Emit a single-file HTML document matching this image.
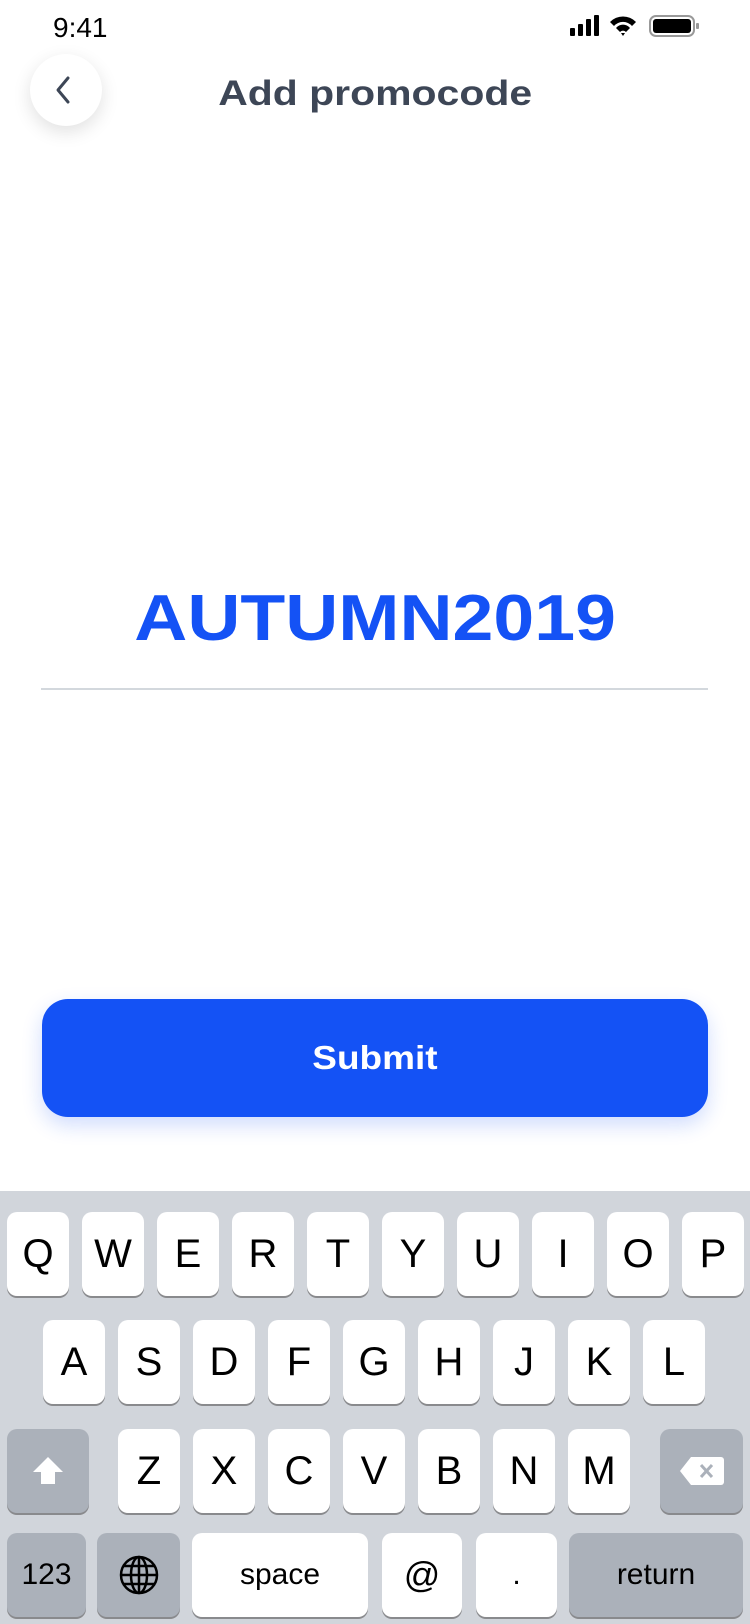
<!DOCTYPE html>
<html><head><meta charset="utf-8"><style>
*{margin:0;padding:0;box-sizing:border-box}
body{width:750px;height:1624px;background:#fff;position:relative;overflow:hidden;font-family:"Liberation Sans",sans-serif}
.abs{position:absolute}
.kb{position:absolute;left:0;top:1191px;width:750px;height:433px;background:#d1d5db}
.k{position:absolute;height:84px;background:#fff;border-radius:10px;box-shadow:0 2px 0 #898a8d;display:flex;align-items:center;justify-content:center;font-size:40px;color:#000}
.g{background:#abb1ba}
.s{font-size:30px}
.sx{display:inline-block}
</style></head><body>
<div class="abs" style="left:53px;top:12px;font-size:28px;color:#000">9:41</div>
<svg class="abs" style="left:570px;top:14px" width="140" height="24" viewBox="0 0 140 24">
<rect x="0" y="14" width="5" height="8" rx="1"/><rect x="8" y="10" width="5" height="12" rx="1"/><rect x="16" y="5" width="5" height="17" rx="1"/><rect x="24" y="1" width="5" height="21" rx="1"/>
<path d="M40 8 A18 18 0 0 1 66 8 L62 12 A12 12 0 0 0 44 12Z M46 14 A9 9 0 0 1 60 14 L56 18 A4 4 0 0 0 50 18Z M51 19 L53 22 L55 19Z"/>
<rect x="80" y="2" width="44" height="20" rx="6" fill="none" stroke="#999" stroke-width="2"/><rect x="83" y="5" width="38" height="14" rx="3"/><rect x="126" y="9" width="3" height="6" rx="1" fill="#999"/>
</svg>
<div class="abs" style="left:30px;top:54px;width:72px;height:72px;border-radius:50%;background:#fff;box-shadow:0 6px 18px rgba(0,0,0,.12)"></div>
<svg class="abs" style="left:52px;top:74px" width="24" height="32" viewBox="0 0 24 32"><path d="M16 4 L6 16 L16 28" fill="none" stroke="#3d4656" stroke-width="3" stroke-linecap="round" stroke-linejoin="round"/></svg>
<div class="abs" style="left:0;width:750px;top:74px;text-align:center;font-size:35px;font-weight:bold;color:#3d4656"><span class="sx" style="transform:scaleX(1.17)">Add promocode</span></div>
<div class="abs" style="left:0;width:750px;top:580px;text-align:center;font-size:65px;font-weight:bold;color:#1452f5"><span class="sx" style="transform:scaleX(1.13)">AUTUMN2019</span></div>
<div class="abs" style="left:41px;top:688px;width:667px;height:2px;background:#d3d8dd"></div>
<div class="abs" style="left:42px;top:999px;width:666px;height:118px;border-radius:26px;background:#1452f5;box-shadow:0 8px 20px rgba(20,82,245,.2);display:flex;align-items:center;justify-content:center;color:#fff;font-size:33px;font-weight:bold"><span class="sx" style="transform:scaleX(1.12)">Submit</span></div>
<div class="kb">
<div class="k" style="left:7px;top:21px;width:62px">Q</div>
<div class="k" style="left:82px;top:21px;width:62px">W</div>
<div class="k" style="left:157px;top:21px;width:62px">E</div>
<div class="k" style="left:232px;top:21px;width:62px">R</div>
<div class="k" style="left:307px;top:21px;width:62px">T</div>
<div class="k" style="left:382px;top:21px;width:62px">Y</div>
<div class="k" style="left:457px;top:21px;width:62px">U</div>
<div class="k" style="left:532px;top:21px;width:62px">I</div>
<div class="k" style="left:607px;top:21px;width:62px">O</div>
<div class="k" style="left:682px;top:21px;width:62px">P</div>
<div class="k" style="left:43px;top:129px;width:62px">A</div>
<div class="k" style="left:118px;top:129px;width:62px">S</div>
<div class="k" style="left:193px;top:129px;width:62px">D</div>
<div class="k" style="left:268px;top:129px;width:62px">F</div>
<div class="k" style="left:343px;top:129px;width:62px">G</div>
<div class="k" style="left:418px;top:129px;width:62px">H</div>
<div class="k" style="left:493px;top:129px;width:62px">J</div>
<div class="k" style="left:568px;top:129px;width:62px">K</div>
<div class="k" style="left:643px;top:129px;width:62px">L</div>
<div class="k g" style="left:7px;top:238px;width:82px"><svg width="34" height="34" viewBox="0 0 34 34"><path d="M17 3 L32 18 L24 18 L24 30 L10 30 L10 18 L2 18Z" fill="#fff"/></svg></div>
<div class="k" style="left:118px;top:238px;width:62px">Z</div>
<div class="k" style="left:193px;top:238px;width:62px">X</div>
<div class="k" style="left:268px;top:238px;width:62px">C</div>
<div class="k" style="left:343px;top:238px;width:62px">V</div>
<div class="k" style="left:418px;top:238px;width:62px">B</div>
<div class="k" style="left:493px;top:238px;width:62px">N</div>
<div class="k" style="left:568px;top:238px;width:62px">M</div>
<div class="k g" style="left:660px;top:238px;width:83px"><svg width="46" height="32" viewBox="0 0 46 32"><path d="M12 2 H42 A3 3 0 0 1 45 5 V27 A3 3 0 0 1 42 30 H12 L1 16Z" fill="#fff"/><path d="M22 10 L33 22 M33 10 L22 22" stroke="#abb1ba" stroke-width="3"/></svg></div>
<div class="k g s" style="left:7px;top:342px;width:79px">123</div>
<div class="k g" style="left:97px;top:342px;width:83px"><svg width="42" height="42" viewBox="0 0 42 42" fill="none" stroke="#000" stroke-width="2.5"><circle cx="21" cy="21" r="18"/><ellipse cx="21" cy="21" rx="8" ry="18"/><path d="M21 3 V39 M3 21 H39 M6 12 H36 M6 30 H36"/></svg></div>
<div class="k s" style="left:192px;top:342px;width:176px">space</div>
<div class="k s" style="left:382px;top:342px;width:80px;font-size:36px">@</div>
<div class="k s" style="left:476px;top:342px;width:81px">.</div>
<div class="k g s" style="left:569px;top:342px;width:174px">return</div>
</div>
</body></html>
